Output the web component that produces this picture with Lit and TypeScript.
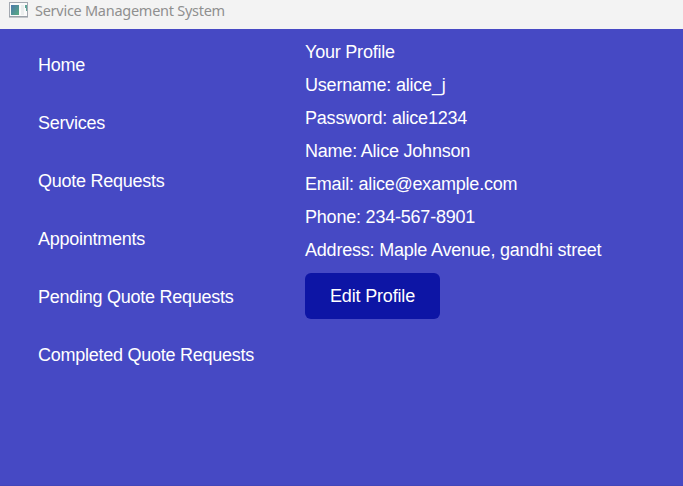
import { LitElement, html, css } from "lit";
import { customElement } from "lit/decorators.js";

const NAV = ["Home", "Services", "Quote Requests", "Appointments", "Pending Quote Requests", "Completed Quote Requests"];
const PROFILE = [
  "Your Profile",
  "Username: alice_j",
  "Password: alice1234",
  "Name: Alice Johnson",
  "Email: alice@example.com",
  "Phone: 234-567-8901",
  "Address: Maple Avenue, gandhi street",
];

@customElement("app-root")
export class AppRoot extends LitElement {
  static styles = css`
    :host {
      display: flex;
      flex-direction: column;
      height: 100vh;
      overflow: hidden;
      background: #4649c4;
      color: #fff;
      font: 18px/21px "Liberation Sans", Arial, sans-serif;
    }
    .titlebar {
      display: flex;
      flex: none;
      height: 29px;
      box-sizing: border-box;
      padding-left: 9px;
      gap: 6px;
      background: #f3f3f3;
      color: #8f8f8f;
      font: 14.5px/20px "Noto Sans", "Open Sans", sans-serif;
      letter-spacing: -0.27px;
    }
    .icon { flex: none; margin-top: 2px; }
    .body { display: flex; flex: 1; border-bottom: 1px solid #4346b8; }
    .nav { flex: none; width: 229px; padding: 26px 0 0 38px; letter-spacing: -0.26px; }
    .item { height: 58px; white-space: nowrap; }
    .profile { padding: 13px 0 0 38px; letter-spacing: -0.21px; }
    .line { height: 33px; white-space: nowrap; }
    button {
      display: block;
      width: 135px;
      height: 46px;
      padding: 0;
      border: 0;
      border-radius: 6px;
      background: #0d15a5;
      color: inherit;
      font: inherit;
      letter-spacing: -0.17px;
    }
  `;

  render() {
    return html`
      <header class="titlebar">
        <svg class="icon" width="20" height="16" viewBox="0 0 20 16">
          <defs>
            <linearGradient id="pane" x1="0" y1="0" x2="1" y2="1">
              <stop offset="0" stop-color="#4c78ac" />
              <stop offset="1" stop-color="#58ac80" />
            </linearGradient>
          </defs>
          <rect x=".5" y=".5" width="18" height="14" fill="#fafafa" stroke="#a4a9b1" />
          <path d="M0 15h19" stroke="#9298a0" />
          <rect x="2" y="3" width="8" height="10" fill="url(#pane)" />
          <rect x="12" y="3" width="3" height="10" fill="#ebeeee" />
          <path d="M16 3h2v6h-1v-3h-1z" fill="#5fa498" />
        </svg>
        <span>Service Management System</span>
      </header>
      <main class="body">
        <nav class="nav">${NAV.map((t) => html`<div class="item">${t}</div>`)}</nav>
        <section class="profile">
          ${PROFILE.map((t) => html`<div class="line">${t}</div>`)}
          <button>Edit Profile</button>
        </section>
      </main>
    `;
  }
}
